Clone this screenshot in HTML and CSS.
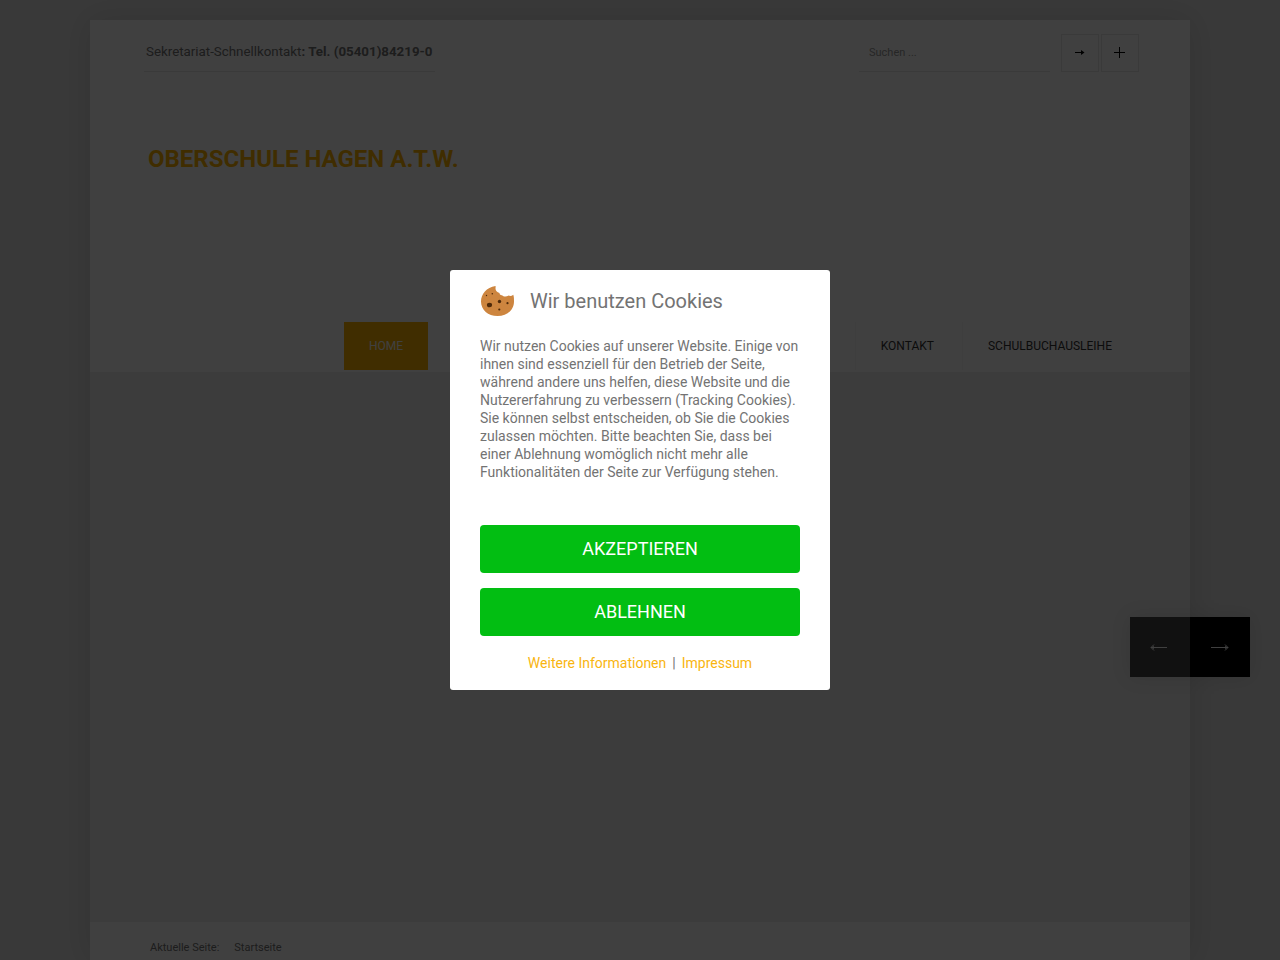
FILE: index.html
```html
<!DOCTYPE html>
<html lang="de">
<head>
<meta charset="utf-8">
<meta name="viewport" content="width=device-width, initial-scale=1">
<title>Oberschule Hagen a.T.W.</title>
<link rel="stylesheet" href="styles.css">
</head>
<body>
<div class="page">
	<header class="header">
		<div class="topbar">
			<p class="contact">Sekretariat-Schnellkontakt<b>: Tel. (05401)84219-0</b></p>
			<form class="search">
				<input type="search" class="search-input" placeholder="Suchen ..." aria-label="Suchen">
				<button type="submit" class="square" aria-label="Suchen">
					<svg width="10" height="10" viewBox="0 0 10 10"><path d="M0 4.500h8" stroke="#000"/><path d="M6 2l3.500 2.500L6 7z"/></svg>
				</button>
				<button type="button" class="square" aria-label="Mehr">
					<svg width="12" height="12" viewBox="0 0 12 12"><path d="M0 5.500h11M5.500 0v11" stroke="#000"/></svg>
				</button>
			</form>
		</div>
		<h1 class="logo"><a href="#">Oberschule Hagen a.T.W.</a></h1>
		<nav class="menu">
			<a href="#" class="active">Home</a>
			<a href="#">Kontakt</a>
			<a href="#">Schulbuchausleihe</a>
		</nav>
	</header>

	<section class="slider">
		<div class="slider-nav">
			<button type="button" class="prev" aria-label="Zurück">
				<svg width="20" height="8" viewBox="0 0 20 8"><path d="M17 4.500H1M4 1.500L1 4.500l3 3" stroke="#fff" fill="none"/><path d="M4 3L1 4.500 4 6z" fill="#fff"/></svg>
			</button>
			<button type="button" class="next" aria-label="Weiter">
				<svg width="18" height="8" viewBox="0 0 18 8"><path d="M0 4.500h17M14 1.500l3 3-3 3" stroke="#fff" fill="none"/><path d="M14 3l3 1.500L14 6z" fill="#fff"/></svg>
			</button>
		</div>
	</section>

	<div class="breadcrumbs"><span>Aktuelle Seite:</span><span>Startseite</span></div>
</div>

<div class="overlay">
	<div class="cookie-box" role="dialog" aria-labelledby="cookie-title">
		<div class="cookie-head">
			<svg width="35" height="32" viewBox="0 0 35 32">
				<path d="M15.500 1C6.500 2.500 1 9 1 16.500 1 25 8 31 17.500 31 27.500 31 34 24.500 34 16.500c0-2.500 0-4.500-.7-6.800-1.500 1.300-3.300 1.600-4.600.9-2.700 1.400-5.200 1.100-6.700-.4-1.500.2-2.500-.7-2.500-2.200-2.500-1-4-2.500-4-4.500 0-1 .3-1.500 0-2.500z" fill="#cd853f"/>
				<g fill="#4f2a0a">
					<ellipse cx="9.500" cy="20" rx="2.600" ry="2.300"/>
					<circle cx="19.500" cy="16.500" r="1.700"/>
					<circle cx="27.500" cy="18.200" r="1.100"/>
					<circle cx="19.300" cy="24.500" r="1.100"/>
					<circle cx="6.500" cy="10.500" r=".7"/>
					<circle cx="12.300" cy="8.800" r=".8"/>
				</g>
			</svg>
			<h2 id="cookie-title">Wir benutzen Cookies</h2>
		</div>
		<p class="cookie-text">Wir nutzen Cookies auf unserer Website. Einige von ihnen sind essenziell für den Betrieb der Seite, während andere uns helfen, diese Website und die Nutzererfahrung zu verbessern (Tracking Cookies). Sie können selbst entscheiden, ob Sie die Cookies zulassen möchten. Bitte beachten Sie, dass bei einer Ablehnung womöglich nicht mehr alle Funktionalitäten der Seite zur Verfügung stehen.</p>
		<div class="cookie-buttons">
			<button type="button">Akzeptieren</button>
			<button type="button">Ablehnen</button>
		</div>
		<div class="cookie-links"><a href="#">Weitere Informationen</a><span>|</span><a href="#">Impressum</a></div>
	</div>
</div>
</body>
</html>
```
FILE: styles.css
```css
* {
	box-sizing: border-box;
}
body {
	margin: 0;
	padding-top: 20px;
	background: #e3e3e3;
	color: #737373;
	font-family: Roboto, "Liberation Sans", sans-serif;
	font-size: 14px;
	line-height: 18px;
	overflow-x: hidden;
}
a {
	color: #f9b510;
	text-decoration: none;
}
button {
	padding: 0;
	border: 0;
	border-radius: 0;
	font-family: inherit;
	cursor: pointer;
}

/* page */
.page {
	max-width: 1100px;
	margin: 0 auto;
	background: #fff;
	box-shadow: 0 0 30px rgba(0,0,0,0.12);
}
.header {
	display: flex;
	flex-direction: column;
}
.topbar {
	display: flex;
	justify-content: space-between;
	padding: 14px 51px 0 54px;
}
.contact {
	height: 38px;
	margin: 0;
	padding: 8px 3px 0 2px;
	border-bottom: 1px solid #e5e5e5;
	font-size: 10pt;
	line-height: 20px;
}
.search {
	display: flex;
	gap: 2px;
}
.search-input {
	width: 191px;
	height: 38px;
	margin-right: 9px;
	padding: 0 10px;
	border: 0;
	border-bottom: 1px solid #e5e5e5;
	background: none;
	font-family: inherit;
	font-size: 11px;
	outline: none;
}
.search-input::placeholder {
	color: #999;
}
.square {
	display: flex;
	align-items: center;
	justify-content: center;
	width: 38px;
	height: 38px;
	border: 1px solid #e5e5e5;
	background: none;
}
.logo {
	margin: 72px 58px 148px;
	font-size: 24px;
	line-height: 30px;
	font-weight: bold;
	text-transform: uppercase;
}
.logo a {
	color: #ffb400;
}
.menu {
	display: flex;
	justify-content: flex-end;
	height: 50px;
	padding: 0 53px 2px 254px;
}
.menu a {
	padding: 0 25px;
	border-left: 1px solid #f7f7f7;
	color: #333;
	font-size: 12px;
	line-height: 48px;
	text-transform: uppercase;
}
.menu a + a {
	padding-right: 28px;
}
.menu a:last-child {
	padding-right: 25px;
}
.menu a.active {
	margin-right: auto;
	border: 0;
	background: #ffb400;
	color: #fff;
}

/* slider */
.slider {
	position: relative;
	height: 550px;
	background: #ededed;
}
.slider-nav {
	position: absolute;
	top: 245px;
	right: -60px;
	display: flex;
	box-shadow: 0 0 20px rgba(0,0,0,0.1);
}
.slider-nav button {
	display: flex;
	align-items: center;
	justify-content: center;
	width: 60px;
	height: 60px;
	background: #000;
}
.slider-nav .prev {
	background: #444;
}
.breadcrumbs {
	display: flex;
	gap: 15px;
	padding: 16px 60px 2px;
	font-size: 11px;
	line-height: 20px;
}

/* cookie popup */
.overlay {
	position: fixed;
	top: 0;
	left: 0;
	right: 0;
	bottom: 0;
	z-index: 100;
	display: flex;
	align-items: center;
	justify-content: center;
	background: rgba(0,0,0,0.75);
}
.cookie-box {
	width: 380px;
	padding: 15px 30px 18px;
	border-radius: 3px;
	background: #fff;
}
.cookie-head {
	display: flex;
	align-items: center;
	gap: 15px;
}
.cookie-head h2 {
	margin: 0;
	font-size: 20px;
	line-height: 32px;
	font-weight: normal;
}
.cookie-text {
	margin: 20px 0 44px;
}
.cookie-buttons {
	display: grid;
	gap: 15px;
}
.cookie-buttons button {
	height: 48px;
	padding-bottom: 2px;
	border-radius: 4px;
	background: #02be12;
	color: #fff;
	font-size: 18px;
	text-transform: uppercase;
}
.cookie-links {
	display: flex;
	justify-content: center;
	gap: 6px;
	margin-top: 18px;
}
```
